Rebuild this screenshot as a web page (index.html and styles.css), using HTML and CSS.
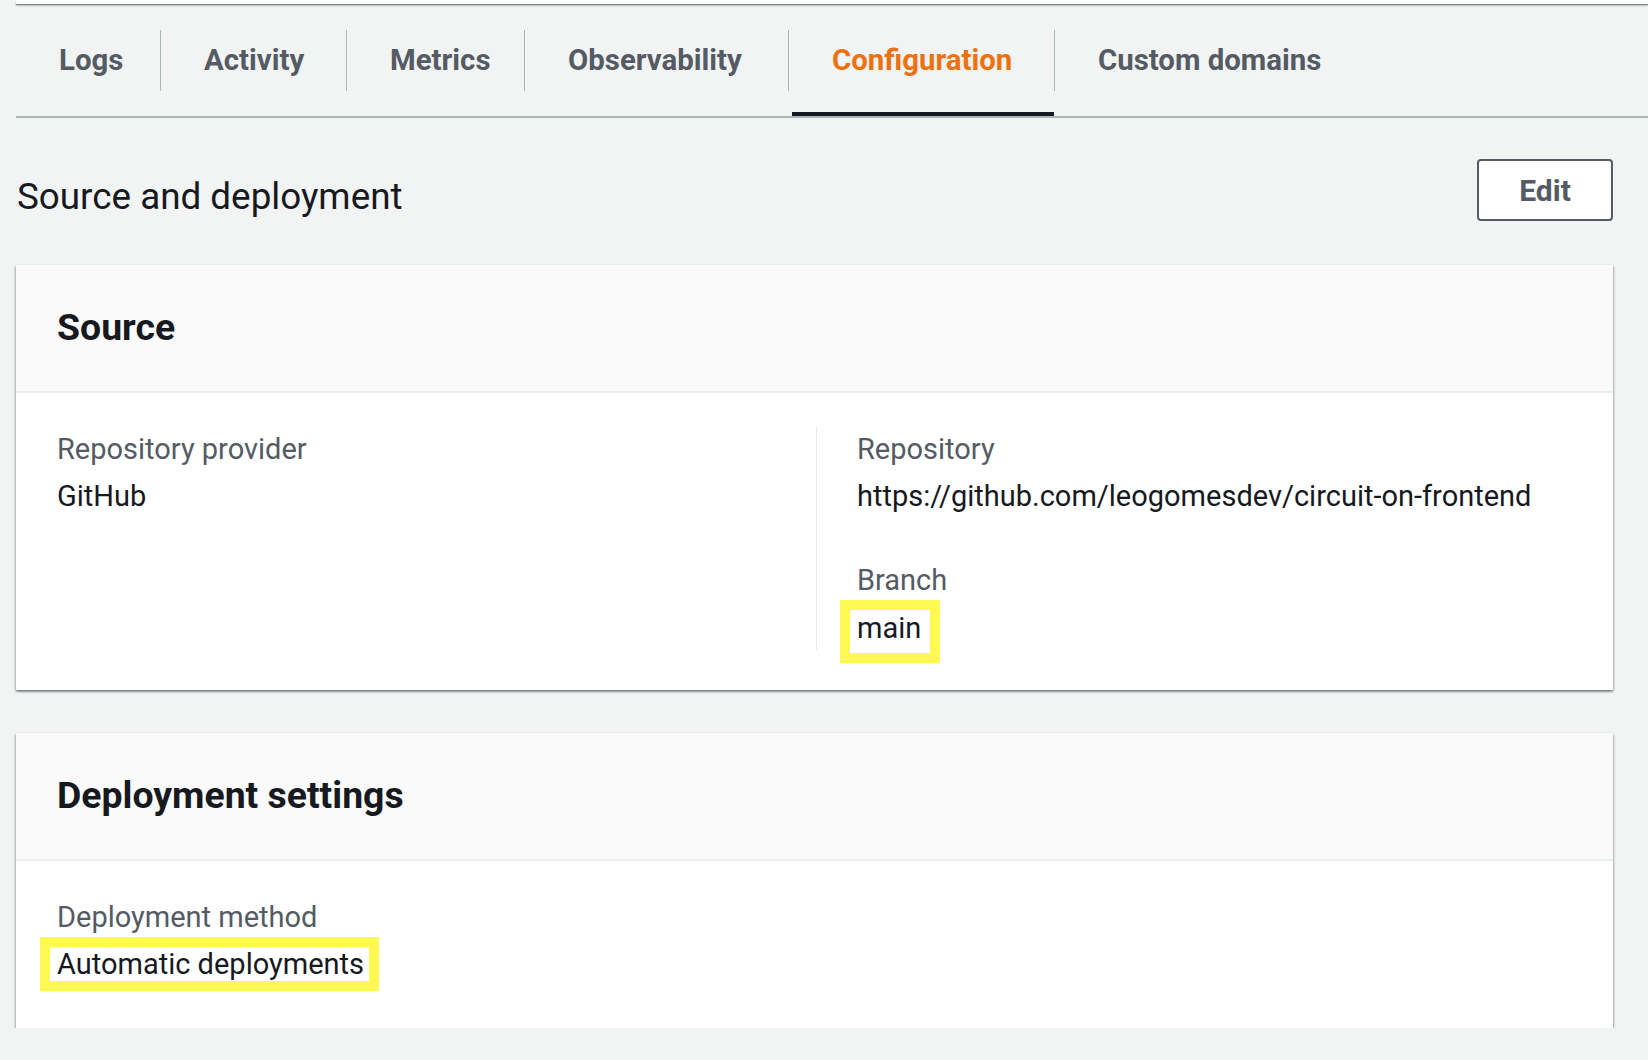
FILE: index.html
```html
<!DOCTYPE html>
<html lang="en">
<head>
<meta charset="utf-8">
<title>Configuration</title>
<link rel="stylesheet" href="styles.css">
</head>
<body>
<div class="topcard"></div>
<nav class="tabs">
  <a class="tab tab-logs">Logs</a><span class="sep"></span>
  <a class="tab tab-activity">Activity</a><span class="sep"></span>
  <a class="tab tab-metrics">Metrics</a><span class="sep"></span>
  <a class="tab tab-observability">Observability</a><span class="sep"></span>
  <a class="tab tab-configuration active">Configuration</a><span class="sep"></span>
  <a class="tab">Custom domains</a>
</nav>
<main class="content">
  <div class="section-head">
    <h1 class="title">Source and deployment</h1>
    <button class="btn">Edit</button>
  </div>

  <section class="card">
    <div class="card-head"><h2>Source</h2></div>
    <div class="card-body cols">
      <div class="col">
        <div class="label">Repository provider</div>
        <div class="value">GitHub</div>
      </div>
      <div class="col col-div">
        <div class="pair">
          <div class="label">Repository</div>
          <div class="value">https://github.com/leogomesdev/circuit-on-frontend</div>
        </div>
        <div class="pair">
          <div class="label">Branch</div>
          <div class="value hl hl-branch">main</div>
        </div>
      </div>
    </div>
  </section>

  <section class="card card-gap">
    <div class="card-head"><h2>Deployment settings</h2></div>
    <div class="card-body">
      <div class="col">
        <div class="label">Deployment method</div>
        <div class="value hl hl-auto">Automatic deployments</div>
      </div>
    </div>
  </section>
</main>
</body>
</html>
```
FILE: styles.css
```css
html, body {
  margin: 0;
  background: #f2f3f3;
  font-family: Roboto, "Liberation Sans", sans-serif;
  color: #16191f;
}

.topcard {
  margin-left: 16px;
  height: 4px;
  background: #ffffff;
  box-shadow: 0 1px 1px rgba(0, 28, 36, 0.45), 0 2px 2px rgba(0, 28, 36, 0.2);
}

/* Tabs */
.tabs {
  display: flex;
  align-items: center;
  margin-left: 16px;
  height: 112px;
  border-bottom: 2px solid #aab7b8;
}

.tab {
  box-sizing: border-box;
  display: flex;
  align-items: center;
  flex: none;
  height: 100%;
  padding: 2px 0 0 43px;
  font-size: 29.4px;
  font-weight: 700;
  line-height: 1;
  color: #545b64;
  white-space: nowrap;
  cursor: pointer;
}

.tab-logs { width: 144px; }
.tab-activity { width: 185px; }
.tab-metrics { width: 177px; }
.tab-observability { width: 263px; }
.tab-configuration { width: 265px; }

.tab.active {
  color: #ec7211;
  background: linear-gradient(#16191f, #16191f) no-repeat right bottom / calc(100% - 3px) 4px;
}

.sep {
  flex: none;
  width: 1px;
  height: 61px;
  background: #aab7b8;
}

/* Content */
.content {
  margin: 0 35px 0 16px;
}

.section-head {
  display: flex;
  justify-content: space-between;
  align-items: flex-start;
  padding-top: 41px;
  margin-bottom: 43px;
}

.title {
  margin: 16px 0 0 1px;
  font-size: 36.8px;
  font-weight: 400;
  line-height: 44px;
  color: #16191f;
}

.btn {
  width: 136px;
  height: 62px;
  border: 2px solid #545b64;
  border-radius: 4px;
  background: #ffffff;
  color: #545b64;
  font-family: Roboto, "Liberation Sans", sans-serif;
  font-size: 30px;
  font-weight: 700;
  padding: 0;
}

/* Cards */
.card {
  background: #ffffff;
  border-top: 1px solid #eaeded;
  box-shadow: 0 2px 2px rgba(0, 28, 36, 0.35), 2px 2px 2px -1px rgba(0, 28, 36, 0.2), -2px 2px 2px -1px rgba(0, 28, 36, 0.2);
}

.card-gap {
  margin-top: 42px;
}

.card-head {
  background: #fafafa;
  padding: 40px 41px 42px;
  border-bottom: 2px solid #eaeded;
}

.card-head h2 {
  margin: 0;
  font-size: 37.4px;
  font-weight: 700;
  line-height: 44px;
  color: #16191f;
}

.card-body {
  padding: 33px 41px 40px;
}

.cols {
  display: grid;
  grid-template-columns: 759px 1fr;
}

.col {
  padding-top: 1px;
}

.col-div {
  border-left: 1px solid #eaeded;
  padding-left: 40px;
}

.label {
  font-size: 29px;
  line-height: 44px;
  color: #545b64;
}

.value {
  font-size: 29px;
  line-height: 44px;
  margin-top: 3px;
  color: #16191f;
}

.pair + .pair {
  margin-top: 40px;
}

/* Yellow annotation highlight */
.hl {
  width: fit-content;
  border: 10px solid #fff952;
}

.hl-branch {
  margin: -2px 0 -13px -17px;
  padding: 0 9px 7px 7px;
  line-height: 36px;
}

.hl-auto {
  margin: -2px 0 -3px -17px;
  padding: 0 5px 0 7px;
  line-height: 34px;
}
```
